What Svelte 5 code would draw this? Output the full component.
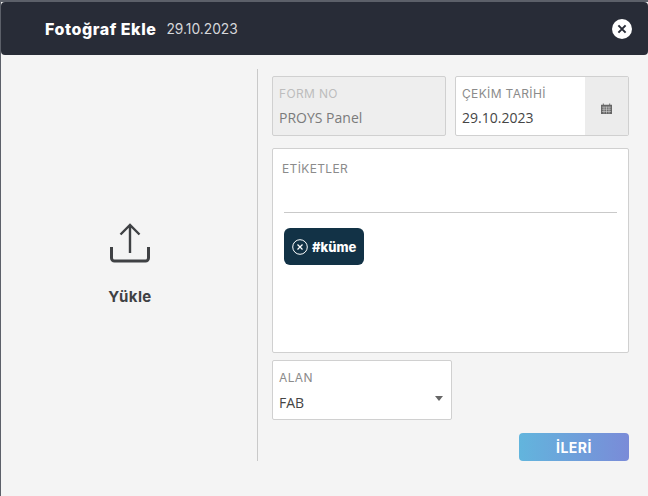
<script>
  const title = 'Fotoğraf Ekle'
  const date = '29.10.2023'
</script>

<div class="modal">
  <header class="head">
    <span class="title">{title}</span>
    <span class="date">{date}</span>
    <button class="close" aria-label="Kapat">
      <svg viewBox="0 0 20 20" width="20" height="20">
        <circle cx="10" cy="10" r="10" fill="#fff" />
        <path d="M6.400 6.400l7.200 7.200M13.600 6.400l-7.200 7.200" stroke="#282c37" stroke-width="2" fill="none" />
      </svg>
    </button>
  </header>

  <div class="content">
    <div class="upload">
      <svg viewBox="0 0 42 42" width="42" height="42">
        <path d="M21 3v28M11.500 12.500L21 3l9.500 9.500" stroke="#3f4144" stroke-width="2.400" fill="none" />
        <path d="M2.500 25v11a3 3 0 0 0 3 3h31a3 3 0 0 0 3-3V25" stroke="#3f4144" stroke-width="3" fill="none" />
      </svg>
      <span class="upload-label">Yükle</span>
    </div>

    <div class="form">
      <div class="row">
        <div class="field disabled">
          <span class="label">FORM NO</span>
          <span class="value">PROYS Panel</span>
        </div>
        <div class="field date-field">
          <div class="date-input">
            <span class="label">ÇEKİM TARİHİ</span>
            <span class="value dark">29.10.2023</span>
          </div>
          <div class="addon">
            <svg viewBox="0 0 12 12" width="11" height="11">
              <path d="M0 2h2V.500h1V2h6V.500h1V2h2v10H0z" fill="#666" />
              <path d="M1 4.500h10M1 6.800h10M1 9.200h10M3.300 4v7.500M6 4v7.500M8.700 4v7.500" stroke="#ddd" stroke-width=".6" />
            </svg>
          </div>
        </div>
      </div>

      <div class="tags">
        <span class="label tags-label">ETİKETLER</span>
        <div class="tag-line"></div>
        <span class="chip">
          <svg viewBox="0 0 16 16" width="16" height="16">
            <circle cx="8" cy="8" r="7.300" fill="none" stroke="#fff" stroke-width="1" />
            <path d="M5.500 5.500l5 5M10.500 5.500l-5 5" stroke="#fff" stroke-width="1.200" />
          </svg>
          <span>#küme</span>
        </span>
      </div>

      <div class="field select">
        <span class="label">ALAN</span>
        <span class="value dark">FAB</span>
        <span class="caret"></span>
      </div>

      <div class="actions">
        <button class="next">İLERİ</button>
      </div>
    </div>
  </div>
</div>

<style>
  :global(body) {
    margin: 0;
    background: #f4f4f4;
  }

  .modal {
    width: 648px;
    height: 496px;
    box-sizing: border-box;
    border-top: 2px solid #5c6069;
    border-left: 1px solid #5c6069;
    background: #f4f4f4;
    font-family: "Open Sans", sans-serif;
  }

  .head {
    height: 53px;
    display: flex;
    align-items: center;
    padding: 0 16px 0 44px;
    background: #282c37;
    border-radius: 4px;
    color: #fff;
    font-family: Inter, sans-serif;
  }

  .title {
    font-size: 16px;
    font-weight: 800;
    letter-spacing: 0.55px;
  }

  .date {
    margin-left: 10px;
    font-size: 13.800px;
    color: #d6d7da;
  }

  .close {
    margin-left: auto;
    width: 20px;
    height: 20px;
    padding: 0;
    border: 0;
    background: none;
  }

  .content {
    display: flex;
    padding-top: 14px;
  }

  .upload {
    width: 256px;
    height: 392px;
    display: flex;
    flex-direction: column;
    align-items: center;
    justify-content: center;
    box-sizing: border-box;
    padding: 0 0 3px 2px;
  }

  .upload svg {
    margin-bottom: 23px;
  }

  .upload-label {
    font-family: Inter, sans-serif;
    font-size: 15px;
    font-weight: 700;
    letter-spacing: 0.4px;
    color: #3f4144;
  }

  .form {
    width: 372px;
    height: 392px;
    box-sizing: border-box;
    padding: 7px 0 0 14px;
    border-left: 1px solid #c9c9c9;
    display: flex;
    flex-direction: column;
  }

  .row {
    display: flex;
    gap: 9px;
  }

  .field {
    box-sizing: border-box;
    height: 60px;
    border: 1px solid #d0d0d0;
    border-radius: 2px;
    background: #fff;
    padding: 9px 6px 0;
    display: flex;
    flex-direction: column;
    gap: 7px;
    position: relative;
  }

  .disabled {
    width: 174px;
    background: #eeeeee;
  }

  .disabled .label {
    color: #bdbdbd;
  }

  .date-field {
    width: 174px;
    padding: 0;
    flex-direction: row;
    gap: 0;
  }

  .date-input {
    flex: 1;
    padding: 9px 6px 0;
    display: flex;
    flex-direction: column;
    gap: 7px;
  }

  .addon {
    width: 43px;
    box-sizing: border-box;
    padding-top: 4px;
    background: #ececec;
    display: flex;
    align-items: center;
    justify-content: center;
  }

  .label {
    font-family: Inter, sans-serif;
    font-size: 12px;
    line-height: 15px;
    letter-spacing: 0.35px;
    color: #8b8b8b;
  }

  .tags-label {
    margin-left: -2px;
  }

  .value {
    font-size: 14px;
    line-height: 19px;
    color: #7b7b7b;
  }

  .dark {
    color: #454545;
  }

  .tags {
    box-sizing: border-box;
    height: 206px;
    margin-top: 12px;
    border: 1px solid #d0d0d0;
    border-radius: 2px;
    background: #fff;
    padding: 12px 11px 0;
    display: flex;
    flex-direction: column;
    align-items: flex-start;
  }

  .tag-line {
    align-self: stretch;
    height: 1px;
    margin-top: 36px;
    background: #c9c9c9;
  }

  .chip {
    height: 37px;
    margin-top: 15px;
    box-sizing: border-box;
    padding: 0 8px 0 8px;
    display: flex;
    align-items: center;
    gap: 4px;
    border-radius: 6px;
    background: #123246;
    color: #fff;
    font-family: Inter, sans-serif;
    font-size: 13px;
    font-weight: 800;
  }

  .select {
    width: 180px;
    margin-top: 7px;
    gap: 8px;
  }

  .caret {
    position: absolute;
    right: 8px;
    top: 35px;
    border: 4px solid transparent;
    border-top: 5px solid #666;
    border-bottom: 0;
  }

  .actions {
    display: flex;
    justify-content: flex-end;
    margin-top: 13px;
  }

  .next {
    width: 110px;
    height: 28px;
    padding: 0;
    border: 0;
    border-radius: 4px;
    background: linear-gradient(90deg, #62b5dd, #7a8bd8);
    color: #fff;
    font-family: Inter, sans-serif;
    font-size: 14px;
    font-weight: 700;
    letter-spacing: 0.5px;
  }
</style>
